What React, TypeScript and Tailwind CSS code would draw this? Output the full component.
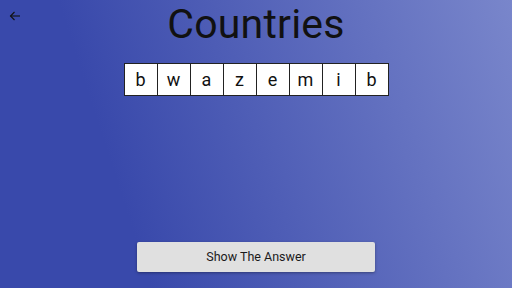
import React from 'react'

const letters = ['b', 'w', 'a', 'z', 'e', 'm', 'i', 'b']

export default function App() {
  return (
    <div
      className="relative flex h-screen w-full flex-col items-center overflow-hidden bg-[linear-gradient(72deg,#3949ab_25%,#7986cb_100%)] text-[#111]"
      style={{ fontFamily: 'Roboto, "Open Sans", sans-serif' }}
    >
      {/* back button */}
      <button className="absolute left-[8px] top-[9px] flex h-[14px] w-[14px] items-center justify-center">
        <svg width="12" height="10" viewBox="0 0 12 10" fill="none" stroke="#111" strokeWidth="1.1">
          <path d="M11 5H1.5" />
          <path d="M5.5 1L1.5 5L5.5 9" />
        </svg>
      </button>

      <h1 className="pt-[4px] text-[41px] leading-[41px] font-normal tracking-[0.2px]">Countries</h1>

      <div className="mt-[18px] flex border-l border-[#222]">
        {letters.map((l, i) => (
          <div
            key={i}
            className="flex h-[33px] w-[33px] items-center justify-center border-y border-r border-[#222] bg-white text-[18px]"
          >
            {l}
          </div>
        ))}
      </div>

      <div className="flex-1" />

      <button className="mb-[16px] h-[30px] w-[238px] rounded-[2px] bg-[#e0e0e0] text-[12.5px] text-[#1a1a1a] shadow-[0_1px_3px_rgba(0,0,0,0.35)]">
        Show The Answer
      </button>
    </div>
  )
}
